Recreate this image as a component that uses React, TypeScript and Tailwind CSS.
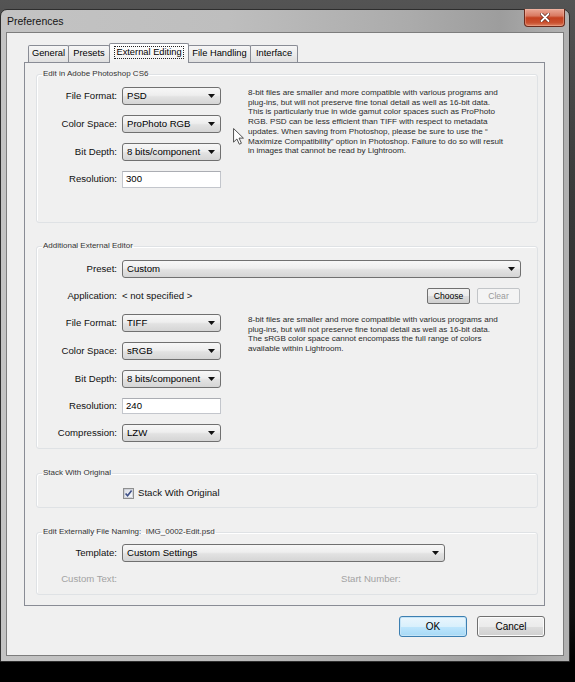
import React from "react";

function Arrow() {
  return (
    <svg width="7" height="4" viewBox="0 0 7 4" className="shrink-0">
      <path d="M0 0H7L3.5 4Z" fill="#111" />
    </svg>
  );
}

function Select({ value, className = "" }: { value: string; className?: string }) {
  return (
    <div
      className={`flex h-[18px] items-center justify-between rounded-[3px] border border-[#707070] bg-[linear-gradient(180deg,#f7f7f7_0%,#eeeeee_45%,#e2e2e2_55%,#d5d5d5_100%)] pl-[4px] pr-[5px] text-[9.6px] text-black ${className}`}
    >
      <span className="whitespace-nowrap">{value}</span>
      <Arrow />
    </div>
  );
}

function Input({ value, h }: { value: string; h: string }) {
  return (
    <div
      className={`flex w-[99px] items-center border border-[#c3c6cc] border-t-[#abadb3] bg-white pl-[3px] text-[9.6px] text-black ${h}`}
    >
      {value}
    </div>
  );
}

function Label({ children, muted = false }: { children: React.ReactNode; muted?: boolean }) {
  return (
    <div className={`w-[80px] shrink-0 whitespace-nowrap text-right text-[9.6px] ${muted ? "text-[#a3a3a3]" : "text-[#111]"}`}>
      {children}
    </div>
  );
}

function Row({ label, children }: { label: string; children: React.ReactNode }) {
  return (
    <div className="flex items-center">
      <Label>{label}</Label>
      <div className="ml-[5px]">{children}</div>
    </div>
  );
}

function Legend({ children }: { children: React.ReactNode }) {
  return (
    <legend className="ml-[5px] px-[1px] whitespace-nowrap text-[8px] leading-[10px] text-[#333]">{children}</legend>
  );
}

function Desc({ lines }: { lines: string[] }) {
  return (
    <div className="ml-[27px] mt-[1px] text-[8.1px] leading-[9.7px] text-[#2a2a2a]">
      {lines.map((l, i) => (
        <div key={i} className="whitespace-nowrap">
          {l}
        </div>
      ))}
    </div>
  );
}

function Tab({ label, w, selected = false }: { label: string; w: string; selected?: boolean }) {
  if (selected) {
    return (
      <div
        className={`relative z-10 -mb-px -ml-px flex h-[20px] items-start justify-center rounded-t-[2px] border border-b-0 border-[#898c95] bg-[linear-gradient(180deg,#ffffff_0%,#f0f0f0_100%)] pt-[2px] text-[9.3px] text-black ${w}`}
      >
        <span className="border border-dotted border-[#222] px-[1px] leading-[11px] whitespace-nowrap">{label}</span>
      </div>
    );
  }
  return (
    <div
      className={`-ml-px flex h-[17px] items-center justify-center rounded-t-[2px] border border-b-0 border-[#898c95] bg-[linear-gradient(180deg,#f6f6f6_0%,#ebebeb_50%,#e0e0e0_100%)] text-[9.3px] text-black whitespace-nowrap first:ml-0 ${w}`}
    >
      {label}
    </div>
  );
}

function Button({ label, variant }: { label: string; variant: "default" | "normal" | "disabled" | "small" }) {
  if (variant === "default") {
    return (
      <div className="flex h-[21px] w-[68px] items-center justify-center rounded-[3px] border border-[#3c7fb1] bg-[linear-gradient(180deg,#eaf6fd_0%,#d9f0fc_50%,#bee6fd_51%,#a7d9f5_100%)] text-[10px] text-black shadow-[inset_0_0_0_1px_#c5e4f7]">
        {label}
      </div>
    );
  }
  if (variant === "normal") {
    return (
      <div className="flex h-[21px] w-[68px] items-center justify-center rounded-[3px] border border-[#707070] bg-[linear-gradient(180deg,#f2f2f2_0%,#ebebeb_50%,#dddddd_51%,#cfcfcf_100%)] text-[10px] text-black shadow-[inset_0_0_0_1px_#fbfbfb]">
        {label}
      </div>
    );
  }
  if (variant === "small") {
    return (
      <div className="flex h-[16px] w-[43px] items-center justify-center rounded-[2px] border border-[#707070] bg-[linear-gradient(180deg,#f2f2f2_0%,#ebebeb_50%,#dddddd_51%,#cfcfcf_100%)] text-[8.6px] text-black">
        {label}
      </div>
    );
  }
  return (
    <div className="flex h-[16px] w-[43px] items-center justify-center rounded-[2px] border border-[#c2c5c8] bg-[#f4f4f4] text-[8.6px] text-[#9a9a9a]">
      {label}
    </div>
  );
}

export default function App() {
  return (
    <div className="relative h-[682px] w-[575px] overflow-hidden bg-[linear-gradient(180deg,#545454_0%,#3c3c3c_25%,#262626_60%,#101010_90%,#000000_97%)] font-['Liberation_Sans',Arial,sans-serif]">
      <div className="mt-[9px] flex h-[653px] w-[570px] flex-col rounded-t-[7px] border border-[#2e2e2e] bg-[linear-gradient(90deg,#c3c3c3_0%,#bebebe_40%,#ababab_72%,#9d9d9d_88%,#b2b2b2_100%)]">
        {/* title bar */}
        <div className="flex h-[22px] shrink-0 items-start justify-between">
          <span className="pl-[6px] pt-[5px] text-[10.5px] leading-[13px] text-[#151515]">Preferences</span>
          <div className="-mt-px mr-[4px] flex h-[18px] w-[41px] items-center justify-center rounded-b-[4px] border border-t-0 border-[#6b2a1c] bg-[linear-gradient(180deg,#eaa896_0%,#d97a62_40%,#c4401f_52%,#c9502f_80%,#dd8262_100%)] shadow-[inset_0_0_0_1px_rgba(255,200,180,0.35)]">
            <svg width="10" height="9" viewBox="0 0 10 9">
              <path d="M1.5 1L8.5 8M8.5 1L1.5 8" stroke="#5a1d10" strokeWidth="3.2" strokeLinecap="round" />
              <path d="M1.5 1L8.5 8M8.5 1L1.5 8" stroke="#ffffff" strokeWidth="1.9" strokeLinecap="round" />
            </svg>
          </div>
        </div>

        {/* client area */}
        <div className="mx-[5px] mb-[5px] flex flex-1 flex-col border border-[#7d7d7d] bg-[#f0f0f0]">
          {/* tabs */}
          <div className="flex items-end pl-[21px] pt-[10px]">
            <Tab label="General" w="w-[41px]" />
            <Tab label="Presets" w="w-[42px]" />
            <Tab label="External Editing" w="w-[80px]" selected />
            <Tab label="File Handling" w="w-[63px]" />
            <Tab label="Interface" w="w-[48px]" />
          </div>

          {/* tab panel */}
          <div className="ml-[17px] flex h-[544px] w-[521px] flex-col border border-[#898c95] bg-[#f0f0f0] pt-[6px]">
            {/* Group 1 */}
            <fieldset className="ml-[11px] mr-[6px] rounded-[3px] border border-[#dfe2e5] shadow-[inset_1px_1px_0_#ffffff]">
              <Legend>Edit in Adobe Photoshop CS6</Legend>
              <div className="flex pb-[34px] pt-[8px]">
                <div className="flex flex-col gap-[10px]">
                  <Row label="File Format:">
                    <Select value="PSD" className="w-[99px]" />
                  </Row>
                  <Row label="Color Space:">
                    <Select value="ProPhoto RGB" className="w-[99px]" />
                  </Row>
                  <Row label="Bit Depth:">
                    <Select value="8 bits/component" className="w-[99px]" />
                  </Row>
                  <Row label="Resolution:">
                    <Input value="300" h="h-[17px]" />
                  </Row>
                </div>
                <Desc
                  lines={[
                    "8-bit files are smaller and more compatible with various programs and",
                    "plug-ins, but will not preserve fine tonal detail as well as 16-bit data.",
                    "This is particularly true in wide gamut color spaces such as ProPhoto",
                    "RGB. PSD can be less efficient than TIFF with respect to metadata",
                    "updates. When saving from Photoshop, please be sure to use the \u201c",
                    "Maximize Compatibility\u201d option in Photoshop. Failure to do so will result",
                    "in images that cannot be read by Lightroom.",
                  ]}
                />
              </div>
            </fieldset>

            {/* Group 2 */}
            <fieldset className="ml-[11px] mr-[6px] mt-[18px] rounded-[3px] border border-[#dfe2e5] shadow-[inset_1px_1px_0_#ffffff]">
              <Legend>Additional External Editor</Legend>
              <div className="flex flex-col gap-[10px] pb-[6px] pt-[9px]">
                <div className="flex items-center pr-[16px]">
                  <Label>Preset:</Label>
                  <Select value="Custom" className="ml-[5px] flex-1" />
                </div>
                <div className="flex h-[16px] items-center pr-[17px]">
                  <Label>Application:</Label>
                  <span className="ml-[5px] flex-1 text-[9.6px] text-[#111]">&lt; not specified &gt;</span>
                  <Button label="Choose" variant="small" />
                  <div className="ml-[7px]">
                    <Button label="Clear" variant="disabled" />
                  </div>
                </div>
                <div className="flex">
                  <div className="flex flex-col gap-[10px]">
                    <Row label="File Format:">
                      <Select value="TIFF" className="w-[99px]" />
                    </Row>
                    <Row label="Color Space:">
                      <Select value="sRGB" className="w-[99px]" />
                    </Row>
                    <Row label="Bit Depth:">
                      <Select value="8 bits/component" className="w-[99px]" />
                    </Row>
                    <Row label="Resolution:">
                      <Input value="240" h="h-[16px]" />
                    </Row>
                    <Row label="Compression:">
                      <Select value="LZW" className="w-[99px]" />
                    </Row>
                  </div>
                  <Desc
                    lines={[
                      "8-bit files are smaller and more compatible with various programs and",
                      "plug-ins, but will not preserve fine tonal detail as well as 16-bit data.",
                      "The sRGB color space cannot encompass the full range of colors",
                      "available within Lightroom.",
                    ]}
                  />
                </div>
              </div>
            </fieldset>

            {/* Group 3 */}
            <fieldset className="ml-[11px] mr-[6px] mt-[19px] rounded-[3px] border border-[#dfe2e5] shadow-[inset_1px_1px_0_#ffffff]">
              <Legend>Stack With Original</Legend>
              <div className="mb-[7px] mt-[9px] flex h-[13px] items-center pl-[86px]">
                <svg width="11" height="11" viewBox="0 0 11 11" className="shrink-0">
                  <defs>
                    <linearGradient id="cbg" x1="0" y1="0" x2="1" y2="1">
                      <stop offset="0" stopColor="#dcdfe6" />
                      <stop offset="1" stopColor="#f8f9fb" />
                    </linearGradient>
                  </defs>
                  <rect x="0.5" y="0.5" width="10" height="10" fill="#fff" stroke="#8e8f8f" />
                  <rect x="1.5" y="1.5" width="8" height="8" fill="url(#cbg)" stroke="#b9bdc6" strokeWidth="0.6" />
                  <path d="M2.6 5.4L4.6 7.8L8.6 2.6" fill="none" stroke="#3d4f87" strokeWidth="1.6" />
                </svg>
                <span className="ml-[4px] whitespace-nowrap text-[9.6px] text-[#111]">Stack With Original</span>
              </div>
            </fieldset>

            {/* Group 4 */}
            <fieldset className="ml-[11px] mr-[6px] mt-[19px] rounded-[3px] border border-[#dfe2e5] shadow-[inset_1px_1px_0_#ffffff]">
              <Legend>Edit Externally File Naming:&nbsp;&nbsp;IMG_0002-Edit.psd</Legend>
              <div className="flex flex-col pb-[9px] pt-[7px]">
                <div className="flex items-center">
                  <Label>Template:</Label>
                  <Select value="Custom Settings" className="ml-[5px] w-[323px]" />
                </div>
                <div className="mt-[11px] flex h-[12px] items-center">
                  <Label muted>Custom Text:</Label>
                  <span className="ml-[224px] whitespace-nowrap text-[9.6px] text-[#a3a3a3]">Start Number:</span>
                </div>
              </div>
            </fieldset>
          </div>

          {/* dialog buttons */}
          <div className="mt-[10px] flex justify-end gap-[10px] pr-[18px]">
            <Button label="OK" variant="default" />
            <Button label="Cancel" variant="normal" />
          </div>
        </div>
      </div>

      {/* mouse pointer */}
      <svg
        width="11"
        height="17"
        viewBox="0 0 12.5 19.5"
        className="pointer-events-none absolute left-[233px] top-[128px]"
      >
        <path d="M0.6 0.6L0.6 16.2L4.4 12.6L7.2 18.6L9.6 17.5L6.9 11.6L11.9 11.6Z" fill="#ffffff" stroke="#3a3a3a" strokeWidth="1" strokeLinejoin="round" />
      </svg>
    </div>
  );
}
